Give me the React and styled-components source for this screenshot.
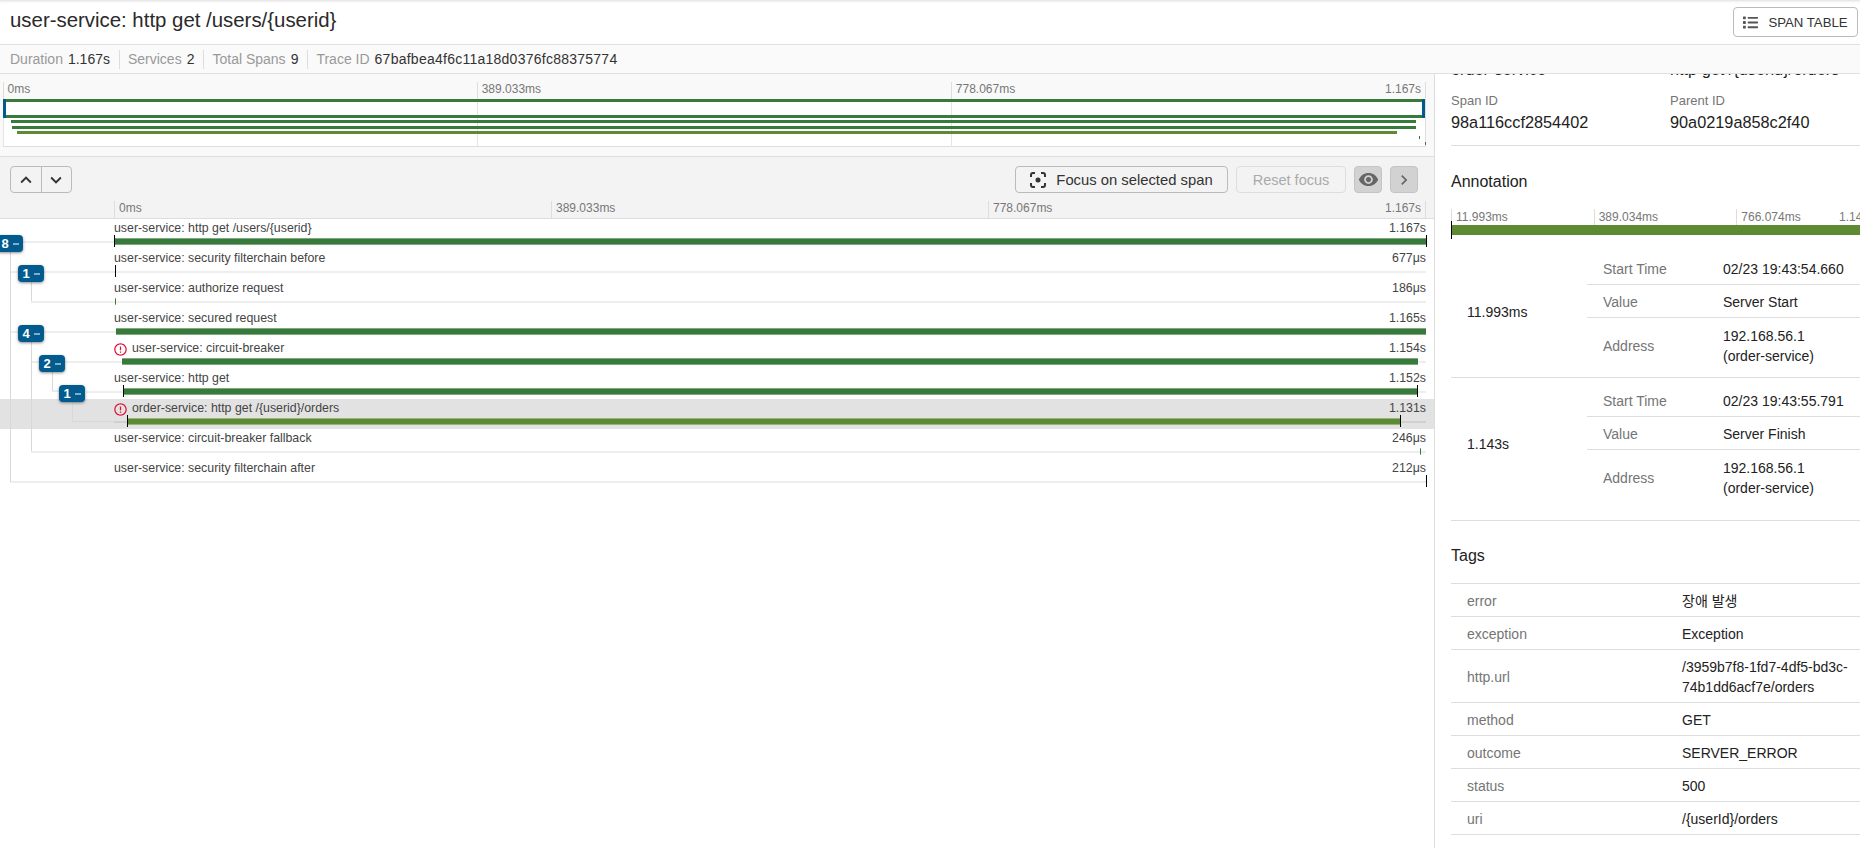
import React from 'react'
import styled, { createGlobalStyle } from 'styled-components'
import {
  MdKeyboardArrowUp,
  MdKeyboardArrowDown,
  MdKeyboardArrowRight,
  MdVisibility,
  MdErrorOutline
} from 'react-icons/md'
import { FaList } from 'react-icons/fa'

const GREEN = '#387a3c'
const OLIVE = '#5f8a34'
const BLUE = '#015b8e'

const spans = [
  { name: 'user-service: http get /users/{userid}', time: '1.167s', left: 0, width: 100, tickStart: true, tickEnd: true },
  { name: 'user-service: security filterchain before', time: '677μs', left: 0.06, width: 0, tickStart: true },
  { name: 'user-service: authorize request', time: '186μs', left: 0.08, width: 0.05 },
  { name: 'user-service: secured request', time: '1.165s', left: 0.15, width: 99.85 },
  { name: 'user-service: circuit-breaker', time: '1.154s', left: 0.6, width: 98.8, error: true },
  { name: 'user-service: http get', time: '1.152s', left: 0.65, width: 98.7, tickStart: true, tickEnd: true },
  { name: 'order-service: http get /{userid}/orders', time: '1.131s', left: 1, width: 97, error: true, tickStart: true, tickEnd: true, selected: true, color: OLIVE },
  { name: 'user-service: circuit-breaker fallback', time: '246μs', left: 99.55, width: 0.05 },
  { name: 'user-service: security filterchain after', time: '212μs', left: 100, width: 0, tickEnd: true }
]

const badges = [
  { count: 8, x: -3, y: 16 },
  { count: 1, x: 18, y: 46 },
  { count: 4, x: 18, y: 106 },
  { count: 2, x: 39, y: 136 },
  { count: 1, x: 59, y: 166 }
]

const annotations = [
  { at: '11.993ms', start: '02/23 19:43:54.660', value: 'Server Start', first: true },
  { at: '1.143s', start: '02/23 19:43:55.791', value: 'Server Finish' }
]

const tags = [
  ['error', '장애 발생'],
  ['exception', 'Exception'],
  ['http.url', '/3959b7f8-1fd7-4df5-bd3c-74b1dd6acf7e/orders'],
  ['method', 'GET'],
  ['outcome', 'SERVER_ERROR'],
  ['status', '500'],
  ['uri', '/{userId}/orders']
]

const GlobalStyle = createGlobalStyle`
  html, body {
    margin: 0;
    overflow: hidden;
    background: #fff;
  }
  * {
    box-sizing: border-box;
  }
`

const Page = styled.div`
  width: 1860px;
  height: 848px;
  overflow: hidden;
  display: flex;
  flex-direction: column;
  font-family: "Liberation Sans", "Noto Sans CJK KR", Arial, sans-serif;
  color: #222;
`

const Header = styled.header`
  flex: 0 0 45px;
  display: flex;
  align-items: center;
  justify-content: space-between;
  padding: 0 2px 4px 10px;
  border-bottom: 1px solid #e0e0e0;
  box-shadow: inset 0 3px 3px -2px rgba(0, 0, 0, 0.14);
`

const Title = styled.h1`
  margin: 0;
  font-size: 20.4px;
  font-weight: 400;
  line-height: 24px;
  color: #2a2a2a;
`

const Button = styled.div`
  display: flex;
  align-items: center;
  justify-content: center;
  height: 27px;
  border: 1px solid ${({ $disabled }) => ($disabled ? '#ddd' : '#bbb')};
  border-radius: 4px;
  font-size: 14.5px;
  color: ${({ $disabled }) => ($disabled ? '#aaa' : '#333')};
  width: ${({ $width }) => $width}px;
`

const TableButton = styled(Button)`
  height: 30px;
  margin-top: 4px;
  font-size: 13.2px;
  background: #fff;
  gap: 10px;
  svg {
    font-size: 15px;
    color: #555;
  }
`

const SummaryBar = styled.div`
  flex: 0 0 29px;
  display: flex;
  align-items: center;
  padding-left: 10px;
  background: #fafafa;
  border-bottom: 1px solid #e0e0e0;
  font-size: 14px;
  color: #333;
`

const Stat = styled.div`
  display: flex;
  align-items: center;
  height: 19px;
  gap: 5px;
  padding-right: 9px;
  margin-right: 8px;
  border-right: ${({ $last }) => ($last ? 'none' : '1px solid #ddd')};
`

const StatLabel = styled.span`
  color: #999;
`

const TraceId = styled.span`
  letter-spacing: 0.25px;
`

const Main = styled.div`
  flex: 1;
  min-height: 0;
  display: flex;
`

const TracePanel = styled.section`
  flex: 0 0 1434px;
  display: flex;
  flex-direction: column;
`

const Overview = styled.div`
  flex: 0 0 83px;
  padding: 8px 8px 0 2.5px;
  background: #f9f9f9;
  border-bottom: 1px solid #ddd;
`

const Ruler = styled.div`
  display: flex;
  height: ${({ $height }) => $height || 17}px;
  border-right: 1px solid #ddd;
  font-size: 12px;
  line-height: ${({ $lineHeight }) => $lineHeight || 15}px;
  color: #777;
`

const RulerCell = styled.div`
  flex: 1;
  display: flex;
  justify-content: space-between;
  padding: 0 4px;
  border-left: 1px solid #ddd;
`

const MiniMap = styled.div`
  position: relative;
  height: 48px;
  display: flex;
  background: #fff;
  border-right: 1px solid #ddd;
  border-bottom: 1px solid #ddd;
`

const MiniGrid = styled.div`
  flex: 1;
  border-left: 1px solid #e4e4e4;
`

const MiniBar = styled.div`
  position: absolute;
  height: 3px;
  min-width: 1px;
  background: ${({ $color }) => $color};
`

const MiniHandle = styled.div`
  position: absolute;
  top: 0;
  ${({ $side }) => $side}: 0;
  width: 3px;
  height: 19px;
  background: ${BLUE};
`

const Toolbar = styled.div`
  flex: 0 0 61px;
  display: flex;
  flex-direction: column;
  background: #f3f3f3;
  border-bottom: 1px solid #ddd;
  padding: 9px 8px 0 114px;
`

const ToolRow = styled.div`
  display: flex;
  align-items: center;
  height: 27px;
  margin-left: -104px;
  margin-right: 8px;
  margin-bottom: 8px;
`

const NavGroup = styled.div`
  display: flex;
  width: 62px;
  height: 27px;
  border: 1px solid #bbb;
  border-radius: 4px;
  margin-right: auto;
`

const NavButton = styled.div`
  flex: 1;
  display: flex;
  align-items: center;
  justify-content: center;
  font-size: 22px;
  color: #333;
  & + & {
    border-left: 1px solid #bbb;
  }
`

const FocusButton = styled(Button)`
  margin-right: 8px;
  font-size: 14.8px;
  gap: 10px;
`

const SquareButton = styled.div`
  display: flex;
  align-items: center;
  justify-content: center;
  width: 28px;
  height: 27px;
  margin-left: ${({ $gap }) => $gap}px;
  background: #d2d2d2;
  border: 1px solid #c4c4c4;
  border-radius: 4px;
  font-size: ${({ $size }) => $size}px;
  color: #666;
`

const Rows = styled.div`
  position: relative;
`

const Row = styled.div`
  height: 30px;
  padding: 2px 8px 0 114px;
  background: ${({ $selected }) => ($selected ? '#e2e2e2' : 'transparent')};
`

const RowText = styled.div`
  display: flex;
  align-items: center;
  height: 15px;
  font-size: 12.35px;
  line-height: 15px;
  color: #444;
`

const RowName = styled.span`
  flex: 1;
`

const ErrorMark = styled(MdErrorOutline)`
  font-size: 15px;
  color: #dc143c;
  margin: 1px 4px 0 -1px;
`

const Track = styled.div`
  position: relative;
  height: 11px;
  &::before {
    content: '';
    position: absolute;
    left: 0;
    right: 0;
    top: 5px;
    height: 2px;
    background: ${({ $selected }) => ($selected ? '#d0d0d0' : '#eee')};
  }
`

const Bar = styled.div`
  position: absolute;
  top: 2px;
  height: 7px;
  min-width: 1px;
  background: ${({ $color }) => $color};
  border-top: 1px solid rgba(255, 255, 255, ${({ $plain }) => ($plain ? 0 : 0.35)});
  border-bottom: 1px solid rgba(255, 255, 255, ${({ $plain }) => ($plain ? 0 : 0.35)});
`

const BarTick = styled.div`
  position: absolute;
  top: -1px;
  width: 1px;
  height: 12px;
  background: #000;
`

const TreeLines = styled.svg`
  position: absolute;
  left: 0;
  top: 0;
  pointer-events: none;
`

const Badge = styled.div`
  position: absolute;
  left: ${({ $x }) => $x}px;
  top: ${({ $y }) => $y}px;
  width: 26px;
  height: 17px;
  display: flex;
  align-items: center;
  justify-content: center;
  gap: 4px;
  background: ${BLUE};
  border-radius: 4px;
  box-shadow: 0 1px 3px rgba(0, 0, 0, 0.45);
  font-size: 13px;
  font-weight: 700;
  color: #fff;
`

const BadgeDash = styled.span`
  width: 6px;
  height: 2px;
  background: rgba(255, 255, 255, 0.5);
`

const DetailPanel = styled.aside`
  flex: 0 0 463px;
  padding: 0 17px 0 16px;
  border-left: 1px solid #ddd;
  overflow: hidden;
  background: #fff;
`

const IdGrid = styled.div`
  display: grid;
  grid-template-columns: 219px 1fr;
  row-gap: 14px;
  margin-top: -15px;
  padding-bottom: 13px;
  border-bottom: 1px solid #ddd;
`

const IdLabel = styled.div`
  font-size: 13px;
  line-height: 16px;
  margin-bottom: 3px;
  color: #757575;
`

const IdValue = styled.div`
  font-size: 16.3px;
  line-height: 20px;
  color: #222;
`

const SectionTitle = styled.h2`
  margin: ${({ $top }) => $top}px 0 ${({ $bottom }) => $bottom}px;
  font-size: 16px;
  font-weight: 400;
  line-height: 20px;
  color: #222;
`

const AnnotationBar = styled.div`
  position: relative;
  height: 10px;
  background: ${OLIVE};
`

const AnnotationTick = styled.div`
  position: absolute;
  left: 0;
  top: -4px;
  width: 1px;
  height: 18px;
  background: #000;
`

const AnnotationRow = styled.div`
  display: grid;
  grid-template-columns: 136px 1fr;
  padding: ${({ $first }) => ($first ? '17px 0 0' : '6px 0 11px')};
  border-bottom: 1px solid #ddd;
`

const AnnotationTime = styled.div`
  display: flex;
  align-items: center;
  padding: 0 0 5px 16px;
  font-size: 14px;
  color: #222;
`

const InfoRow = styled.div`
  display: grid;
  grid-template-columns: ${({ $key }) => $key}px 1fr;
  align-items: center;
  min-height: 33px;
  padding: ${({ $tall }) => ($tall ? '8px 0 11px' : '7px 0 5px')};
  font-size: 14px;
  line-height: 20px;
  border-bottom: ${({ $bare }) => ($bare ? 'none' : '1px solid #ddd')};
`

const InfoKey = styled.div`
  padding-left: 16px;
  color: #757575;
`

const InfoValue = styled.div`
  color: #222;
  overflow-wrap: anywhere;
  max-width: ${({ $max }) => $max || 'none'};
`

const TagList = styled.div`
  border-top: 1px solid #ddd;
`

const axis = ['0ms', '389.033ms', '778.067ms', '1.167s']

const TimeRuler = ({ labels, height, lineHeight }) => (
  <Ruler $height={height} $lineHeight={lineHeight}>
    <RulerCell><span>{labels[0]}</span></RulerCell>
    <RulerCell><span>{labels[1]}</span></RulerCell>
    <RulerCell><span>{labels[2]}</span><span>{labels[3]}</span></RulerCell>
  </Ruler>
)

const FocusIcon = () => (
  <svg width='16' height='16' viewBox='0 0 16 16' fill='none' stroke='#333' strokeWidth='2'>
    <path d='M1 5V3a2 2 0 0 1 2-2h2M11 1h2a2 2 0 0 1 2 2v2M15 11v2a2 2 0 0 1-2 2h-2M5 15H3a2 2 0 0 1-2-2v-2' />
    <circle cx='8' cy='8' r='2.5' fill='#333' stroke='none' />
  </svg>
)

const Tree = () => (
  <TreeLines width='114' height='270' viewBox='0 0 114 270'>
    <g fill='none' stroke='#eee' strokeWidth='2'>
      <path d='M22 23H114M10 53H18M44 53H114M31 83H114M10 113H18M44 113H114M65 143H114M86 173H114M31 233H114M10 263H114' />
    </g>
    <g fill='none' stroke='#d8d8d8' strokeWidth='1'>
      <path d='M10.5 30V263M31.5 60V82M31.5 120V232M52.5 150V172H59M72.5 180V202.5H114M31 143H39' />
    </g>
  </TreeLines>
)

const App = () => (
  <Page>
    <GlobalStyle />
    <Header>
      <Title>user-service: http get /users/{'{userid}'}</Title>
      <TableButton $width={125}><FaList />SPAN TABLE</TableButton>
    </Header>
    <SummaryBar>
      <Stat><StatLabel>Duration</StatLabel>1.167s</Stat>
      <Stat><StatLabel>Services</StatLabel>2</Stat>
      <Stat><StatLabel>Total Spans</StatLabel>9</Stat>
      <Stat $last><StatLabel>Trace ID</StatLabel><TraceId>67bafbea4f6c11a18d0376fc88375774</TraceId></Stat>
    </SummaryBar>
    <Main>
      <TracePanel>
        <Overview>
          <TimeRuler labels={axis} />
          <MiniMap>
            <MiniGrid />
            <MiniGrid />
            <MiniGrid />
            {spans.map(span => (
              <MiniBar
                key={span.name}
                $color={span.color || GREEN}
                style={{
                  top: `${(spans.indexOf(span) * 48) / 9}px`,
                  left: `${span.left}%`,
                  width: `${span.width}%`
                }}
              />
            ))}
            <MiniHandle $side='left' />
            <MiniHandle $side='right' />
          </MiniMap>
        </Overview>
        <Toolbar>
          <ToolRow>
            <NavGroup>
              <NavButton><MdKeyboardArrowUp /></NavButton>
              <NavButton><MdKeyboardArrowDown /></NavButton>
            </NavGroup>
            <FocusButton $width={213}><FocusIcon />Focus on selected span</FocusButton>
            <Button $width={110} $disabled>Reset focus</Button>
            <SquareButton $gap={8} $size={21}><MdVisibility /></SquareButton>
            <SquareButton $gap={8} $size={20}><MdKeyboardArrowRight /></SquareButton>
          </ToolRow>
          <TimeRuler labels={axis} />
        </Toolbar>
        <Rows>
          {spans.map(span => (
            <Row key={span.name} $selected={span.selected}>
              <RowText>
                {span.error && <ErrorMark />}
                <RowName>{span.name}</RowName>
                <span>{span.time}</span>
              </RowText>
              <Track $selected={span.selected}>
                <Bar
                  $color={span.color || GREEN}
                  $plain={span.width === 0}
                  style={{ left: `${span.left}%`, width: `${span.width}%`, opacity: span.width === 0 ? 0 : 1 }}
                />
                {span.tickStart && <BarTick style={{ left: `${span.left}%` }} />}
                {span.tickEnd && <BarTick style={{ left: `${span.left + span.width}%` }} />}
              </Track>
            </Row>
          ))}
          <Tree />
          {badges.map(badge => (
            <Badge key={`${badge.x}-${badge.y}`} $x={badge.x} $y={badge.y}>
              {badge.count}
              <BadgeDash />
            </Badge>
          ))}
        </Rows>
      </TracePanel>
      <DetailPanel>
        <IdGrid>
          <IdValue>order-service</IdValue>
          <IdValue>http get /{'{userid}'}/orders</IdValue>
          <div>
            <IdLabel>Span ID</IdLabel>
            <IdValue>98a116ccf2854402</IdValue>
          </div>
          <div>
            <IdLabel>Parent ID</IdLabel>
            <IdValue>90a0219a858c2f40</IdValue>
          </div>
        </IdGrid>
        <SectionTitle $top={26} $bottom={17}>Annotation</SectionTitle>
        <TimeRuler labels={['11.993ms', '389.034ms', '766.074ms', '1.143s']} height={16} lineHeight={17} />
        <AnnotationBar><AnnotationTick /></AnnotationBar>
        {annotations.map(item => (
          <AnnotationRow key={item.at} $first={item.first}>
            <AnnotationTime>{item.at}</AnnotationTime>
            <div>
              <InfoRow $key={136}>
                <InfoKey>Start Time</InfoKey>
                <InfoValue>{item.start}</InfoValue>
              </InfoRow>
              <InfoRow $key={136}>
                <InfoKey>Value</InfoKey>
                <InfoValue>{item.value}</InfoValue>
              </InfoRow>
              <InfoRow $key={136} $tall $bare>
                <InfoKey>Address</InfoKey>
                <InfoValue $max='120px'>192.168.56.1 (order-service)</InfoValue>
              </InfoRow>
            </div>
          </AnnotationRow>
        ))}
        <SectionTitle $top={25} $bottom={17}>Tags</SectionTitle>
        <TagList>
          {tags.map(([key, value]) => (
            <InfoRow key={key} $key={231}>
              <InfoKey>{key}</InfoKey>
              <InfoValue $max='172px'>{value}</InfoValue>
            </InfoRow>
          ))}
        </TagList>
      </DetailPanel>
    </Main>
  </Page>
)

export default App
